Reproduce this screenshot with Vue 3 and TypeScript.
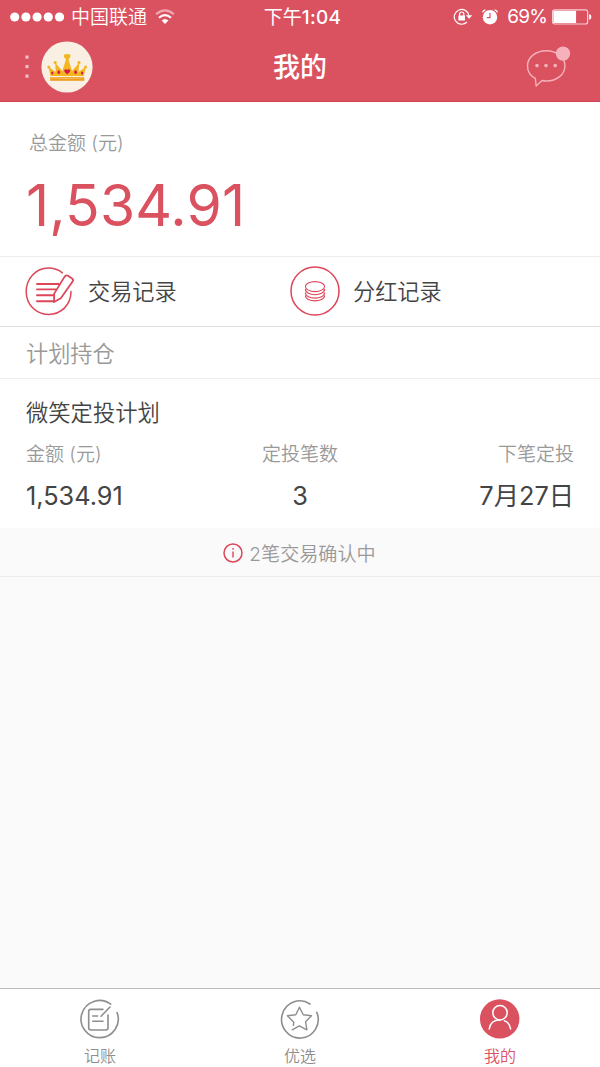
<script setup lang="ts">
interface PlanField {
  label: string
  value: string
  align: 'left' | 'center' | 'right'
}

interface Tab {
  id: 'ledger' | 'picks' | 'mine'
  label: string
}

const fields: PlanField[] = [
  { label: '金额 (元)', value: '1,534.91', align: 'left' },
  { label: '定投笔数', value: '3', align: 'center' },
  { label: '下笔定投', value: '7月27日', align: 'right' },
]

const tabs: Tab[] = [
  { id: 'ledger', label: '记账' },
  { id: 'picks', label: '优选' },
  { id: 'mine', label: '我的' },
]

const activeTab: Tab['id'] = 'mine'
const batteryLevel = 69
</script>

<template>
  <div class="screen">
    <header class="header">
      <div class="status">
        <div class="status-side">
          <svg class="signal" width="54" height="10" viewBox="0 0 54 10" fill="#fff">
            <circle v-for="n in 5" :key="n" :cx="4.7 + (n - 1) * 11.2" cy="5" r="4.6" />
          </svg>
          <span class="carrier">中国联通</span>
          <svg class="wifi" width="20" height="16" viewBox="0 0 20 16" fill="none" stroke="#fff">
            <path d="M1.1 5.2 Q10 -2.6 18.9 5.2" stroke-width="2.1" opacity=".5" />
            <path d="M4 8.8 Q10 3.4 16 8.8" stroke-width="2.2" />
            <path d="M10 15 L6.6 11.6 Q10 8.6 13.4 11.6 Z" fill="#fff" stroke="none" />
          </svg>
        </div>
        <div class="clock">下午<b>1:04</b></div>
        <div class="status-side end">
          <svg class="lock" width="20" height="18" viewBox="0 0 20 18" fill="none" stroke="#fff">
            <path d="M14 14 A7.4 7.4 0 1 1 16 7.6" stroke-width="1.2" />
            <path d="M12.9 7.2 H19.3 L16.1 10.8 Z" fill="#fff" stroke="none" />
            <path d="M6.6 8.2 V6.1 a2.1 2.1 0 0 1 4.2 0 V8.2" stroke-width="1.2" />
            <rect x="5.4" y="7.4" width="6.6" height="5" rx=".5" fill="#fff" stroke="none" />
          </svg>
          <svg class="alarm" width="16" height="16" viewBox="0 0 16 16" fill="none" stroke="#fff">
            <circle cx="8" cy="8.2" r="7.2" fill="#fff" stroke="none" />
            <path d="M8 4 V8.6 H4.8" stroke="#da5160" stroke-width="1.2" />
            <path d="M.6 3.4 Q1 1.2 3.4 .8 M15.4 3.4 Q15 1.2 12.6 .8" stroke-width="1.3" />
          </svg>
          <span class="percent">{{ batteryLevel }}%</span>
          <svg class="battery" width="40" height="16" viewBox="0 0 40 16">
            <rect x=".6" y=".8" width="35" height="14.2" rx="2" fill="none" stroke="#f8d0d5" stroke-width="1.2" />
            <rect x="1.4" y="1.8" :width="32 * batteryLevel / 100 + .6" height="12.2" fill="#fff" />
            <path d="M37.2 5 Q39.4 5.4 39.4 8 Q39.4 10.4 37.2 10.8 Z" fill="#fff" />
          </svg>
        </div>
      </div>
      <div class="nav">
        <div class="profile">
          <svg class="more" width="4" height="24" viewBox="0 0 4 24" fill="#f3bcc3">
            <rect x=".4" y=".5" width="3.2" height="3.2" />
            <rect x=".4" y="10" width="3.2" height="3.2" />
            <rect x=".4" y="19.5" width="3.2" height="3.2" />
          </svg>
          <svg class="avatar" width="52" height="52" viewBox="0 0 52 52">
            <circle cx="26" cy="26" r="25.6" fill="#f9f0e3" />
            <path d="M9.6 35 L7.4 25.8 L14.8 31 L14.2 21.8 L21.4 30 L25.2 17.5 H27.2 L31 30 L38.2 21.8 L37.6 31 L45 25.8 L42.8 35 Z" fill="#f3b61f" />
            <g fill="#f3b61f">
              <circle cx="24.9" cy="15" r="2" />
              <circle cx="27.5" cy="15" r="2" />
              <path d="M23 15.8 L26.2 20 L29.4 15.8 Z" />
              <circle cx="14.2" cy="21.6" r="1.6" />
              <circle cx="38" cy="21.6" r="1.6" />
              <circle cx="7.8" cy="26" r="1.5" />
              <circle cx="44.6" cy="26" r="1.5" />
            </g>
            <rect x="9.2" y="36" width="34" height="3.8" fill="#ee9d20" />
            <path d="M10 36.8 Q26 38 42.4 36.8" stroke="#f9d98a" stroke-width=".7" fill="none" />
            <g fill="#d4184a">
              <path d="M26.2 33.6 L23.6 30.9 a1.5 1.5 0 0 1 2.6 -2 a1.5 1.5 0 0 1 2.6 2 Z" />
              <ellipse cx="17.8" cy="31.2" rx="1.3" ry="1.9" />
              <ellipse cx="34.6" cy="31.2" rx="1.3" ry="1.9" />
              <ellipse cx="11.3" cy="32" rx="1.1" ry="1.6" />
              <ellipse cx="41.1" cy="32" rx="1.1" ry="1.6" />
            </g>
          </svg>
        </div>
        <h1 class="title">我的</h1>
        <svg class="message" width="46" height="44" viewBox="0 0 46 44">
          <path d="M10.3 33.4 C5.5 30.7 2.5 26.3 2.5 20.9 C2.5 12.5 10.5 5.7 21.3 5.7 C32 5.7 39.9 12.5 39.9 20.9 C39.9 29.3 32 36 21.3 36 C19.7 36 18.2 35.8 17 35.5 L11.2 41 Z" fill="none" stroke="#f6b1ba" stroke-width="1.4" stroke-linejoin="round" />
          <g fill="#f6b1ba">
            <circle cx="12" cy="20.6" r="1.8" />
            <circle cx="21" cy="20.6" r="1.8" />
            <circle cx="30.2" cy="20.6" r="1.8" />
            <circle cx="38" cy="8.6" r="7.2" />
          </g>
        </svg>
      </div>
    </header>

    <section class="balance">
      <div class="balance-label">总金额 (元)</div>
      <div class="balance-amount">1,534.91</div>
    </section>

    <section class="shortcuts">
      <div class="shortcut">
        <svg width="50" height="50" viewBox="0 0 50 50" fill="none" stroke="#dd4659" stroke-width="1.5" stroke-linecap="round" stroke-linejoin="round">
          <path d="M37.4 6.8 C33.6 3.7 28.6 2 23.4 2 C10.8 2 1.2 12.6 1.2 25.4 C1.2 38.4 10.8 48.4 23.4 48.4 C36.4 48.4 46 38.6 46 25.6" />
          <path d="M12 18 H33.8 M12 23.4 H31 M12 29.2 H29 M12 35.2 H29" stroke-width="1.9" />
          <path d="M39.8 10.4 Q41 8.6 43 9.8 L47 12.4 Q48.8 13.6 47.6 15.6 L35.8 32.2 L29 36 L29.2 27.6 Z" fill="#fff" stroke-width="1.8" />
        </svg>
        <span>交易记录</span>
      </div>
      <div class="shortcut">
        <svg width="50" height="50" viewBox="0 0 50 50" fill="none" stroke="#dd4659" stroke-width="1.1">
          <circle cx="25" cy="25" r="24" stroke-width="1.5" />
          <ellipse cx="25" cy="20.6" rx="9.6" ry="5" />
          <path d="M15.4 23 C15.4 30.6 34.6 30.6 34.6 23 M15.4 26.4 C15.4 34 34.6 34 34.6 26.4 M15.4 29.6 C15.4 36.6 34.6 36.6 34.6 29.6" />
        </svg>
        <span>分红记录</span>
      </div>
    </section>

    <h2 class="section-title">计划持仓</h2>

    <section class="plan">
      <h3 class="plan-name">微笑定投计划</h3>
      <div class="plan-fields">
        <div v-for="field in fields" :key="field.label" class="field" :class="field.align">
          <div class="field-label">{{ field.label }}</div>
          <div class="field-value">{{ field.value }}</div>
        </div>
      </div>
    </section>

    <div class="notice">
      <svg width="20" height="20" viewBox="0 0 20 20" fill="none" stroke="#dd4659">
        <circle cx="10" cy="10" r="9" stroke-width="1.5" />
        <path d="M10 8.4 V14.6 M10 5 V6.8" stroke-width="1.4" />
      </svg>
      <span>2笔交易确认中</span>
    </div>

    <nav class="tabbar">
      <div v-for="tab in tabs" :key="tab.id" class="tab" :class="{ active: tab.id === activeTab }">
        <svg width="40" height="40" viewBox="0 0 40 40" fill="none" stroke="#8e8e8e" stroke-width="1.6" stroke-linecap="round" stroke-linejoin="round">
          <template v-if="tab.id === 'ledger'">
            <path d="M30.7 5.1 A18.6 18.6 0 1 0 37.1 13.6" />
            <path d="M22.9 10.4 H10.9 Q8.7 10.4 8.7 12.6 V28.8 Q8.7 31 10.9 31 H25.8 Q28 31 28 28.8 V16" />
            <path d="M12.8 17 H17.6 M12.8 22.2 H23 M21 17.2 L30 8" />
          </template>
          <template v-else-if="tab.id === 'picks'">
            <path d="M30 5 A18.3 18.6 0 1 0 36.8 13.4" />
            <path d="M13.4 26.4 L13.8 23.2 L7.4 16.8 L15.8 15.8 L19.4 8.2 L23.3 15.8 L31.5 16.8 L25.6 22.8 L26.9 30.8 L19.3 26.8 L12.2 30.8" stroke-width="1.4" />
          </template>
          <template v-else>
            <circle cx="19.7" cy="19.9" r="19.7" fill="#da5160" stroke="none" />
            <g stroke="#fff" stroke-width="1.5">
              <circle cx="20" cy="13.7" r="7.2" />
              <path d="M9.2 30 Q10.6 20.8 20 21 M24.4 21.7 Q29.6 23.4 30.6 30" />
            </g>
          </template>
        </svg>
        <span>{{ tab.label }}</span>
      </div>
    </nav>
  </div>
</template>

<style>
body {
  margin: 0;
}
</style>

<style scoped>
.screen {
  display: flex;
  flex-direction: column;
  box-sizing: border-box;
  width: 600px;
  height: 1067px;
  overflow: hidden;
  background: #fafafa;
  color: #444;
  font-family: Inter, "Noto Sans CJK SC", sans-serif;
  font-weight: 350;
}

svg {
  display: block;
  flex: none;
}

h1,
h2,
h3 {
  margin: 0;
  font-weight: inherit;
}

.header {
  box-sizing: border-box;
  height: 102px;
  border-bottom: 1px solid #d14256;
  background: #da5160;
  color: #fff;
}

.status {
  display: grid;
  grid-template-columns: 1fr auto 1fr;
  height: 33px;
  padding: 0 8px 0 10px;
  font-size: 19px;
  line-height: 35px;
  white-space: nowrap;
}

.status-side {
  display: flex;
  align-items: center;
  height: 33px;
}

.status-side.end {
  justify-content: flex-end;
}

.carrier {
  margin-left: 7px;
  padding-top: 2px;
}

.wifi {
  margin-left: 8px;
}

.clock {
  margin-left: 3px;
  font-weight: 400;
}

.clock b {
  font-weight: 550;
  letter-spacing: 0.3px;
}

.alarm {
  margin-left: 9px;
}

.percent {
  margin: 0 5px 0 9px;
  font-weight: 400;
  letter-spacing: -0.8px;
}

.nav {
  display: grid;
  grid-template-columns: 1fr auto 1fr;
  align-items: center;
  height: 67px;
  padding: 0 29px 0 25px;
}

.profile {
  display: flex;
  align-items: center;
  gap: 12px;
}

.title {
  margin-left: 4px;
  padding-top: 2px;
  font-size: 27px;
  font-weight: 500;
  line-height: 40px;
}

.message {
  justify-self: end;
}

.balance {
  box-sizing: border-box;
  height: 155px;
  padding: 27px 26px 0;
  border-bottom: 1px solid #ececec;
  background: #fff;
}

.balance-label {
  padding-left: 3px;
  color: #999;
  font-size: 19px;
  line-height: 30px;
}

.balance-amount {
  margin-top: 12px;
  color: #da5160;
  font-size: 57px;
  font-weight: 400;
  letter-spacing: 0.15px;
  line-height: 70px;
}

.shortcuts {
  display: grid;
  grid-template-columns: 265px 1fr;
  box-sizing: border-box;
  height: 70px;
  padding: 0 25px 2px;
  border-bottom: 1px solid #e2e2e2;
  background: #fff;
}

.shortcut {
  display: flex;
  align-items: center;
  gap: 13px;
  font-size: 22.2px;
}

.shortcut span {
  margin-top: -2px;
}

.section-title {
  box-sizing: border-box;
  height: 52px;
  padding: 0 26px;
  border-bottom: 1px solid #ececec;
  background: #fff;
  color: #999;
  font-size: 22.2px;
  line-height: 53px;
}

.plan {
  box-sizing: border-box;
  height: 149px;
  padding: 18px 26px 0;
  background: #fff;
}

.plan-name {
  font-size: 22.3px;
  line-height: 32px;
}

.plan-fields {
  display: grid;
  grid-template-columns: repeat(3, 1fr);
  margin-top: 11px;
}

.field.center {
  text-align: center;
}

.field.right {
  text-align: right;
}

.field-label {
  color: #999;
  font-size: 19px;
  line-height: 30px;
}

.field-value {
  margin-top: 6px;
  font-size: 25.3px;
  font-weight: 400;
  line-height: 40px;
}

.notice {
  display: flex;
  align-items: center;
  justify-content: center;
  gap: 6px;
  box-sizing: border-box;
  height: 49px;
  padding: 1px 1px 0 0;
  border-bottom: 1px solid #ececec;
  color: #999;
  font-size: 19.1px;
}

.tabbar {
  display: grid;
  grid-template-columns: repeat(3, 1fr);
  box-sizing: border-box;
  height: 79px;
  margin-top: auto;
  border-top: 1px solid #bcbcbc;
  background: #fff;
}

.tab {
  display: flex;
  flex-direction: column;
  align-items: center;
  padding-top: 10px;
  color: #8e8e8e;
  font-size: 16px;
  line-height: 24px;
}

.tab span {
  margin-top: 5px;
}

.tab.active {
  color: #da5160;
}
</style>
